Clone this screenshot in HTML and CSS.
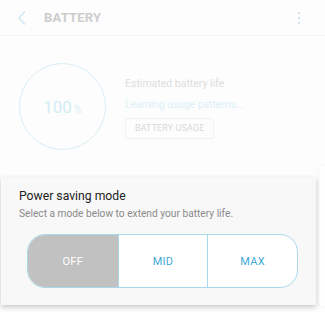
FILE: index.html
```html
<!DOCTYPE html>
<html lang="en">
<head>
    <meta charset="UTF-8">
    <meta name="viewport" content="width=device-width, initial-scale=1.0">
    <title>Battery</title>
    <link rel="stylesheet" href="styles.css">
</head>
<body>
    <div class="screen">
        <div class="app-bar">
            <svg class="back" width="10" height="16" viewBox="0 0 10 16">
                <path d="M8 1.5 L2 8 L8 14.5" fill="none" stroke="#cfe6f1" stroke-width="1.3"/>
            </svg>
            <span class="title">BATTERY</span>
            <span class="more">
                <i></i><i></i><i></i>
            </span>
        </div>

        <div class="summary">
            <div class="gauge">
                <span class="level">100</span><span class="unit">%</span>
            </div>
            <div class="info">
                <div class="estimate">Estimated battery life</div>
                <div class="learning">Learning usage patterns...</div>
                <div class="usage-btn">BATTERY USAGE</div>
            </div>
        </div>

        <div class="peek"></div>

        <div class="sheet">
            <div class="sheet-title">Power saving mode</div>
            <div class="sheet-sub">Select a mode below to extend your battery life.</div>
            <div class="modes">
                <div class="mode active">OFF</div>
                <div class="mode">MID</div>
                <div class="mode">MAX</div>
            </div>
        </div>
    </div>
</body>
</html>
```

FILE: styles.css
```css
html, body {
    margin: 0;
    padding: 0;
    background: #fdfdfd;
}

.screen {
    position: relative;
    width: 325px;
    height: 312px;
    overflow: hidden;
    font-family: Roboto, "Noto Sans", sans-serif;
}

.app-bar {
    display: flex;
    align-items: center;
    height: 36px;
    padding: 0 0 0 17px;
    border-bottom: 1px solid #f5f5f5;
    box-sizing: border-box;
}

.back {
    display: block;
    margin-top: 1px;
}

.title {
    margin-left: 17px;
    font-size: 13px;
    font-weight: bold;
    color: #cdcdcd;
    letter-spacing: 0.2px;
}

.more {
    display: flex;
    flex-direction: column;
    gap: 3px;
    margin-left: auto;
    margin-right: 25px;
    margin-top: 1px;
}

.more i {
    display: block;
    width: 2px;
    height: 2px;
    background: #cfe3ee;
}

.summary {
    display: flex;
    padding: 27px 0 0 19px;
}

.gauge {
    display: flex;
    align-items: baseline;
    justify-content: center;
    width: 87px;
    height: 87px;
    border: 1.3px solid #d9eef7;
    border-radius: 50%;
    box-sizing: border-box;
    line-height: 86px;
    color: #d4ecf6;
}

.level {
    font-size: 17px;
}

.unit {
    font-size: 11px;
    margin-left: 2px;
}

.info {
    margin-left: 19px;
    padding-top: 14px;
}

.estimate {
    font-size: 10.5px;
    color: #dedede;
}

.learning {
    margin-top: 8px;
    font-size: 10.3px;
    color: #dcf0f8;
}

.usage-btn {
    display: inline-block;
    margin-top: 7px;
    padding: 0 9px;
    height: 19px;
    line-height: 19px;
    border: 1px solid #f1f1f1;
    border-radius: 3px;
    font-size: 9px;
    color: #d9d9d9;
    letter-spacing: 0.1px;
}

.peek {
    position: absolute;
    left: 319px;
    top: 165px;
    width: 30px;
    height: 142px;
    border-radius: 6px;
    background: #fefefe;
    box-shadow: 0 0 3px rgba(0, 0, 0, 0.08);
}

.sheet {
    position: absolute;
    left: 1px;
    top: 177px;
    width: 315px;
    height: 128px;
    background: #f8f8f8;
    box-shadow: 0 2px 5px rgba(0, 0, 0, 0.22);
    padding: 12px 18px 0 18px;
    box-sizing: border-box;
}

.sheet-title {
    font-size: 12.2px;
    color: #222;
}

.sheet-sub {
    margin-top: 5px;
    font-size: 10.2px;
    color: #8a8a8a;
}

.modes {
    display: grid;
    grid-template-columns: repeat(3, 1fr);
    margin: 15px 0 0 8px;
    height: 54px;
    border: 1.3px solid #a8d9ea;
    border-radius: 18px;
    overflow: hidden;
    box-sizing: border-box;
    background: #fff;
}

.mode {
    display: flex;
    align-items: center;
    justify-content: center;
    font-size: 11px;
    color: #3fa9d6;
    letter-spacing: 0.3px;
}

.mode + .mode {
    border-left: 1.3px solid #a8d9ea;
}

.mode.active {
    background: #c1c1c1;
    color: #fff;
}
```
